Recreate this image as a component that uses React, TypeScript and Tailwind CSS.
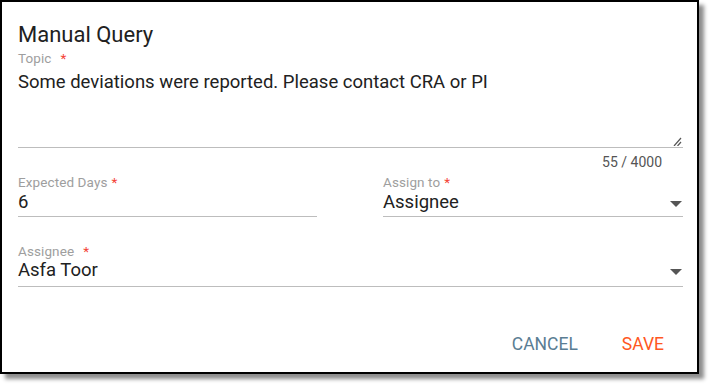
const Caret = () => (
  <svg width="12" height="6" viewBox="0 0 12 6" className="shrink-0">
    <path d="M0 0 L12 0 L6 6 Z" fill="#555" />
  </svg>
);

const Label = ({ text, wide }: { text: string; wide?: boolean }) => (
  <div className="text-[13.5px] leading-[16px] text-[#9e9e9e] tracking-[0.1px]">
    {text}
    <span className={wide ? "ml-[9px] text-[#f44336]" : "ml-[4px] text-[#f44336]"}>*</span>
  </div>
);

const App = () => {
  return (
    <div className="w-[710px] h-[385px] bg-white font-['Roboto',sans-serif]">
      <div className="w-[699px] h-[374px] border-2 border-black bg-white shadow-[5px_5px_4px_rgba(0,0,0,0.45)] pl-[16px] pr-[14px] pt-[20px] flex flex-col">
        <h1 className="text-[22px] leading-[26px] text-[#212121]">Manual Query</h1>

        <div className="mt-[2px]">
          <Label text="Topic" wide />
          <div className="relative h-[82px] border-b border-[#bdbdbd]">
            <div className="text-[18.5px] leading-[22px] text-[#212121] pt-[5px]">
              Some deviations were reported. Please contact CRA or PI
            </div>
            <svg width="10" height="9" viewBox="0 0 10 9" className="absolute right-[1px] bottom-[1px]">
              <path d="M2 9 L9 1 M5.5 9 L9 5" stroke="#555" strokeWidth="1.2" />
            </svg>
          </div>
          <div className="text-right text-[14px] leading-[16px] text-[#555] mt-[6px] pr-[21px]">55 / 4000</div>
        </div>

        <div className="grid grid-cols-[299px_1fr] gap-[66px] mt-[4px]">
          <div>
            <Label text="Expected Days" />
            <div className="h-[27px] border-b border-[#bdbdbd] text-[18.5px] leading-[22px] text-[#212121] pt-[1px]">6</div>
          </div>
          <div>
            <Label text="Assign to" />
            <div className="h-[27px] border-b border-[#bdbdbd] flex items-start justify-between pt-[1px] pr-[1px]">
              <span className="text-[18.5px] leading-[22px] text-[#212121]">Assignee</span>
              <span className="mt-[10px]">
                <Caret />
              </span>
            </div>
          </div>
        </div>

        <div className="mt-[26px]">
          <Label text="Assignee" wide />
          <div className="h-[28px] border-b border-[#bdbdbd] flex items-start justify-between pr-[1px]">
            <span className="text-[18.5px] leading-[22px] text-[#212121]">Asfa Toor</span>
            <span className="mt-[10px]">
              <Caret />
            </span>
          </div>
        </div>

        <div className="flex justify-end gap-[44px] pr-[19px] mt-[46px]">
          <button className="text-[17.5px] leading-[22px] text-[#5a7d93]">CANCEL</button>
          <button className="text-[17.5px] leading-[22px] text-[#ff5722]">SAVE</button>
        </div>
      </div>
    </div>
  );
};

export default App;
